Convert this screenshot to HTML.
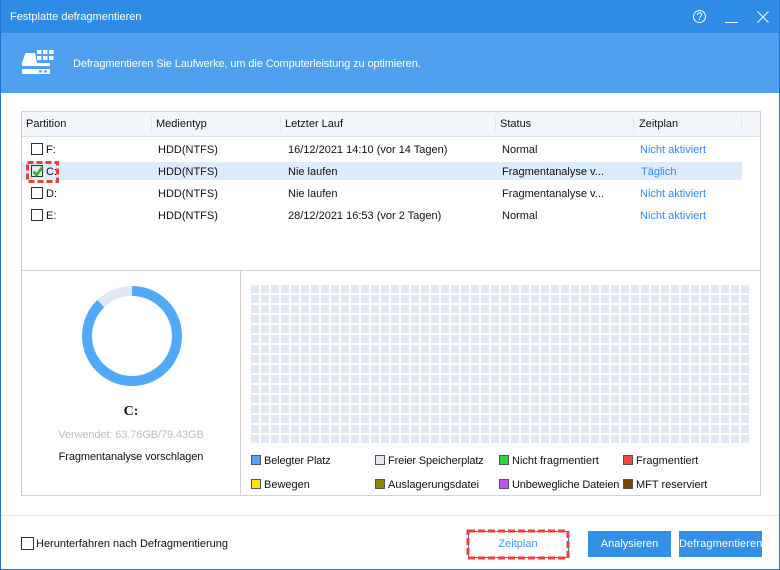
<!DOCTYPE html>
<html><head><meta charset="utf-8">
<style>
html,body{margin:0;padding:0;background:#fff}
body{width:780px;height:570px;position:relative;overflow:hidden;font-family:"Liberation Sans",sans-serif;font-size:11px;color:#111}
.a{position:absolute;white-space:nowrap}
.t{position:absolute;white-space:nowrap;line-height:14px;margin-top:1px}
.l{color:#2b8cf0}
.cb{position:absolute;width:10px;height:10px;border:1px solid #333;background:transparent}
.sw{position:absolute;width:10px;height:10px;box-sizing:border-box;border:1px solid #555}
.sep{position:absolute;top:116px;width:1px;height:15px;background:#e3e6ec}
.btn{position:absolute;top:531px;height:26px;width:83px;background:#3290e6;color:#fff;text-align:center;line-height:26px}
.n{letter-spacing:-.14px}
</style></head><body>
<div class="a" style="left:0;top:0;width:780px;height:33px;background:#2e8ce6"></div>
<div class="a" style="left:0;top:33px;width:780px;height:60px;background:#519fef"></div>
<div class="a" style="left:0;top:0;width:1px;height:570px;background:#1f74c8"></div>
<div class="a" style="left:779px;top:0;width:1px;height:570px;background:#1f74c8"></div>
<div class="a" style="left:0;top:569px;width:780px;height:1px;background:#2a6fb5"></div>
<div class="t" style="left:10px;top:9px;color:#fff">Festplatte defragmentieren</div>
<svg class="a" style="left:690px;top:6px" width="90" height="24" fill="none" stroke="#fff" stroke-width="1">
<circle cx="9.5" cy="10.5" r="6"/><path d="M7.500 9c0-3 4-3 4 0 0 1.500-2 1.500-2 3.200M9.500 13v1"/>
<path d="M35 16.500h13"/><path d="M67.500 5.500l11 11M78.500 5.500l-11 11"/></svg>
<svg class="a" style="left:20px;top:48px" width="36" height="28" fill="#fff">
<path d="M2 26v-5h28v5z"/>
<path d="M2 18v-3l3-9q.5-1 1.500-1h8.500l2 10h13v3z"/>
<path d="M17 2h4.500v4h-4.500zM23 2h4.500v4h-4.500zM29 2h4.500v4h-4.500zM17 8h4.500v4h-4.500zM23 8h4.500v4h-4.500zM29 8h4.500v4h-4.500z"/>
<path d="M19 22.500h3v2h-3zM24 22.500h3v2h-3z" fill="#519fef"/></svg>
<div class="t" style="left:73px;top:56px;color:#fff;letter-spacing:-.11px">Defragmentieren Sie Laufwerke, um die Computerleistung zu optimieren.</div>

<div class="a" style="left:21px;top:111px;width:738px;height:383px;border:1px solid #d2d2d2"></div>
<div class="a" style="left:22px;top:112px;width:738px;height:24px;background:#f2f5fa;border-bottom:1px solid #d8e0ea"></div>
<div class="sep" style="left:151px"></div><div class="sep" style="left:280px"></div><div class="sep" style="left:495px"></div><div class="sep" style="left:633px"></div><div class="sep" style="left:741px"></div>
<div class="t" style="left:26px;top:116px">Partition</div>
<div class="t" style="left:156px;top:116px">Medientyp</div>
<div class="t" style="left:285px;top:116px">Letzter Lauf</div>
<div class="t" style="left:500px;top:116px">Status</div>
<div class="t" style="left:639px;top:116px">Zeitplan</div>

<div class="a" style="left:22px;top:162px;width:720px;height:18px;background:#dcebfd"></div>
<div class="cb" style="left:31px;top:143px"></div><div class="cb" style="left:31px;top:165px"></div><div class="cb" style="left:31px;top:187px"></div><div class="cb" style="left:31px;top:209px"></div>
<svg class="a" style="left:31px;top:164px" width="14" height="14"><path d="M2.500 7.500l3 3.500 6-8" fill="none" stroke="#3fae1c" stroke-width="2.600"/></svg>
<svg class="a" style="left:26px;top:161px" width="34" height="22" fill="none"><rect x="1.500" y="1.500" width="30" height="19" stroke="#e8403a" stroke-width="3" stroke-dasharray="6 3"/></svg>
<div class="t" style="left:46px;top:142px">F:</div><div class="t" style="left:46px;top:164px">C:</div><div class="t" style="left:46px;top:186px">D:</div><div class="t" style="left:46px;top:208px">E:</div>
<div class="t" style="left:158px;top:142px">HDD(NTFS)</div><div class="t" style="left:158px;top:164px">HDD(NTFS)</div><div class="t" style="left:158px;top:186px">HDD(NTFS)</div><div class="t" style="left:158px;top:208px">HDD(NTFS)</div>
<div class="t" style="left:288px;top:142px">16/12/2021 14:10 (vor 14 Tagen)</div><div class="t" style="left:288px;top:164px">Nie laufen</div><div class="t" style="left:288px;top:186px">Nie laufen</div><div class="t" style="left:288px;top:208px">28/12/2021 16:53 (vor 2 Tagen)</div>
<div class="t" style="left:502px;top:142px">Normal</div><div class="t" style="left:502px;top:164px">Fragmentanalyse v...</div><div class="t" style="left:502px;top:186px">Fragmentanalyse v...</div><div class="t" style="left:502px;top:208px">Normal</div>
<div class="t l" style="left:640px;top:142px">Nicht aktiviert</div><div class="t l" style="left:641px;top:164px">Täglich</div><div class="t l" style="left:640px;top:186px">Nicht aktiviert</div><div class="t l" style="left:640px;top:208px">Nicht aktiviert</div>

<div class="a" style="left:22px;top:270px;width:738px;height:1px;background:#d2d2d2"></div>
<div class="a" style="left:240px;top:270px;width:1px;height:225px;background:#d2d2d2"></div>
<svg class="a" style="left:82px;top:286px" width="100" height="100" fill="none" stroke-width="10">
<circle cx="50" cy="50" r="45" stroke="#e0e9f3"/>
<circle cx="50" cy="50" r="45" stroke="#52a9fb" pathLength="360" stroke-dasharray="316 44" transform="rotate(-90 50 50)"/></svg>
<div class="t" style="left:22px;width:218px;text-align:center;top:404px;font-family:'Liberation Serif',serif;font-weight:bold;font-size:14px">C:</div>
<div class="t" style="left:22px;width:218px;text-align:center;top:427px;color:#bdbdbd;letter-spacing:-.1px">Verwendet: 63.76GB/79.43GB</div>
<div class="t" style="left:22px;width:218px;text-align:center;top:449px;letter-spacing:-.1px">Fragmentanalyse vorschlagen</div>

<svg class="a" style="left:251px;top:285px" width="498" height="158"><defs><pattern id="g" width="10" height="10" patternUnits="userSpaceOnUse"><rect width="8" height="8" fill="#dfe8f3"/></pattern></defs><rect width="498" height="158" fill="url(#g)"/></svg>

<div class="sw" style="left:251px;top:455px;background:#4ea6f8"></div><div class="t n" style="left:264px;top:453px">Belegter Platz</div>
<div class="sw" style="left:375px;top:455px;background:#e2eaf4"></div><div class="t n" style="left:388px;top:453px">Freier Speicherplatz</div>
<div class="sw" style="left:499px;top:455px;background:#2bd53c"></div><div class="t" style="left:512px;top:453px">Nicht fragmentiert</div>
<div class="sw" style="left:623px;top:455px;background:#fb4646"></div><div class="t" style="left:636px;top:453px">Fragmentiert</div>
<div class="sw" style="left:251px;top:479px;background:#ffdf0a"></div><div class="t" style="left:264px;top:477px">Bewegen</div>
<div class="sw" style="left:375px;top:479px;background:#8e8500"></div><div class="t" style="left:388px;top:477px">Auslagerungsdatei</div>
<div class="sw" style="left:499px;top:479px;background:#c050f5"></div><div class="t n" style="left:512px;top:477px">Unbewegliche Dateien</div>
<div class="sw" style="left:623px;top:479px;background:#7b4300"></div><div class="t" style="left:636px;top:477px">MFT reserviert</div>

<div class="a" style="left:1px;top:515px;width:778px;height:1px;background:#e6e8f0"></div>
<div class="a" style="left:21px;top:537px;width:11px;height:11px;border:1px solid #333"></div>
<div class="t" style="left:36px;top:536px">Herunterfahren nach Defragmentierung</div>
<div class="a" style="left:468px;top:531px;width:99px;height:25px;border:1px solid #2e8ce6"></div>
<svg class="a" style="left:466px;top:529px" width="104" height="31" fill="none"><rect x="2" y="2" width="100" height="27" stroke="#e8403a" stroke-width="3" stroke-dasharray="7 3"/></svg>
<div class="t l" style="left:468px;width:100px;text-align:center;top:536px;color:#3f97ef">Zeitplan</div>
<div class="btn" style="left:588px">Analysieren</div>
<div class="btn" style="left:679px;letter-spacing:.1px">Defragmentieren</div>
</body></html>
